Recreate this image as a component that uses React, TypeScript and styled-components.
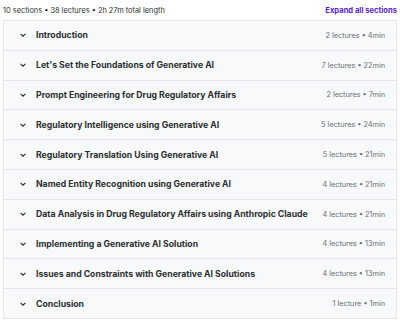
import styled, { createGlobalStyle } from 'styled-components'

interface Section {
  title: string
  lectures: number
  minutes: number
}

const sections: Section[] = [
  { title: 'Introduction', lectures: 2, minutes: 4 },
  { title: "Let's Set the Foundations of Generative AI", lectures: 7, minutes: 22 },
  { title: 'Prompt Engineering for Drug Regulatory Affairs', lectures: 2, minutes: 7 },
  { title: 'Regulatory Intelligence using Generative AI', lectures: 5, minutes: 24 },
  { title: 'Regulatory Translation Using Generative AI', lectures: 5, minutes: 21 },
  { title: 'Named Entity Recognition using Generative AI', lectures: 4, minutes: 21 },
  { title: 'Data Analysis in Drug Regulatory Affairs using Anthropic Claude', lectures: 4, minutes: 21 },
  { title: 'Implementing a Generative AI Solution', lectures: 4, minutes: 13 },
  { title: 'Issues and Constraints with Generative AI Solutions', lectures: 4, minutes: 13 },
  { title: 'Conclusion', lectures: 1, minutes: 1 },
]

const Global = createGlobalStyle`
  body {
    margin: 0;
    background: #fff;
    font-family: Inter, 'Liberation Sans', sans-serif;
    color: #2d2f31;
  }
`

const Wrap = styled.div`
  padding: 2px 3px 0 3px;
  width: 394px;
`

const Summary = styled.div`
  display: flex;
  justify-content: space-between;
  align-items: center;
  height: 16px;
  margin-bottom: 2px;
`

const Stats = styled.span`
  font-size: 7.4px;
  color: #2d2f31;
`

const ExpandAll = styled.button`
  border: none;
  background: none;
  padding: 0;
  font-family: inherit;
  font-size: 7.6px;
  font-weight: 700;
  color: #5624d0;
  cursor: pointer;
`

const List = styled.div`
  border: 1px solid #e4e8eb;
  border-bottom: none;
`

const Row = styled.div`
  display: flex;
  align-items: center;
  height: 28.8px;
  padding: 0 11px 0 15px;
  background: #f7f9fa;
  border-bottom: 1px solid #e4e8eb;
`

const Chevron = styled.svg`
  width: 8px;
  height: 8px;
  flex: none;
  margin-right: 9px;
`

const Title = styled.span`
  flex: 1;
  font-size: 8.7px;
  font-weight: 700;
  color: #2d2f31;
  white-space: nowrap;
`

const Meta = styled.span`
  font-size: 7.3px;
  color: #6a6f73;
  white-space: nowrap;
`

export default function App() {
  return (
    <Wrap>
      <Global />
      <Summary>
        <Stats>10 sections • 38 lectures • 2h 27m total length</Stats>
        <ExpandAll>Expand all sections</ExpandAll>
      </Summary>
      <List>
        {sections.map(s => (
          <Row key={s.title}>
            <Chevron viewBox='0 0 8 8'>
              <path d='M1.6 2.8 L4 5.2 L6.4 2.8' fill='none' stroke='#2d2f31' strokeWidth='1.1' />
            </Chevron>
            <Title>{s.title}</Title>
            <Meta>
              {s.lectures} {s.lectures === 1 ? 'lecture' : 'lectures'} • {s.minutes}min
            </Meta>
          </Row>
        ))}
      </List>
    </Wrap>
  )
}
